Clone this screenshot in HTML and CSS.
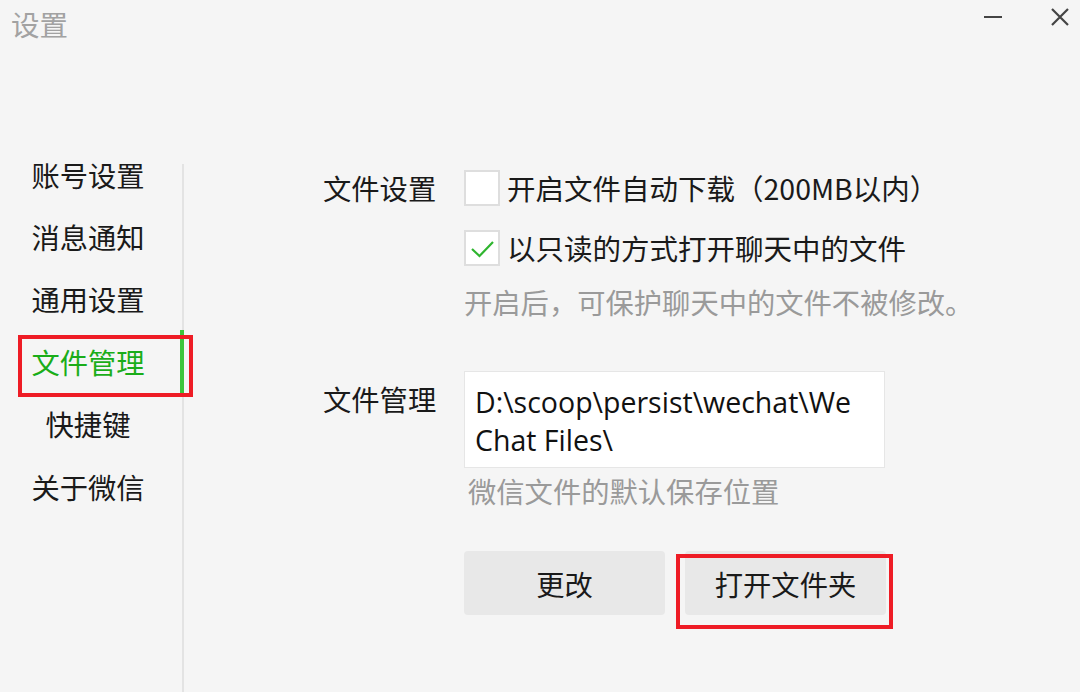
FILE: index.html
```html
<!DOCTYPE html>
<html lang="zh-CN">
<head>
<meta charset="utf-8">
<title>设置</title>
<link rel="stylesheet" href="styles.css">
</head>
<body>
<div class="window">
  <header class="titlebar">
    <div class="title">设置</div>
    <div class="controls">
      <svg class="ctl-min" width="18" height="4" viewBox="0 0 18 4"><line x1="0" y1="2" x2="18" y2="2" stroke="#444" stroke-width="2"/></svg>
      <svg class="ctl-close" width="18" height="18" viewBox="0 0 18 18"><path d="M1 1 L17 17 M17 1 L1 17" stroke="#444" stroke-width="2.2" fill="none"/></svg>
    </div>
  </header>
  <div class="main">
    <nav class="sidebar">
      <div class="nav-item">账号设置</div>
      <div class="nav-item">消息通知</div>
      <div class="nav-item">通用设置</div>
      <div class="nav-item active">文件管理</div>
      <div class="nav-item">快捷键</div>
      <div class="nav-item">关于微信</div>
    </nav>
    <section class="content">
      <div class="row">
        <div class="label">文件设置</div>
        <div class="group">
          <div class="option">
            <span class="checkbox"></span>
            <span class="opt-text">开启文件自动下载（200MB以内）</span>
          </div>
          <div class="option second">
            <span class="checkbox">
              <svg width="36" height="36" viewBox="0 0 36 36"><path d="M8 19 L15.5 26 L29 12" stroke="#2fb52f" stroke-width="2.2" fill="none"/></svg>
            </span>
            <span class="opt-text">以只读的方式打开聊天中的文件</span>
          </div>
          <div class="hint first-hint">开启后，可保护聊天中的文件不被修改。</div>
        </div>
      </div>
      <div class="row row-files">
        <div class="label label-files">文件管理</div>
        <div class="group">
          <div class="path-box">D:\scoop\persist\wechat\WeChat Files\</div>
          <div class="hint path-hint">微信文件的默认保存位置</div>
          <div class="buttons">
            <button class="btn">更改</button>
            <button class="btn marked">打开文件夹</button>
          </div>
        </div>
      </div>
    </section>
  </div>
</div>
</body>
</html>
```
FILE: styles.css
```css
*, *::before, *::after { box-sizing: border-box; }
html, body {
  margin: 0;
  padding: 0;
  background: #f5f5f5;
}
body {
  font-family: "Noto Sans CJK SC", "Noto Sans", sans-serif;
  color: #1a1a1a;
  width: 1080px;
  height: 692px;
  overflow: hidden;
}
.window {
  display: flex;
  flex-direction: column;
  height: 692px;
}
.titlebar {
  height: 60px;
  display: flex;
  justify-content: space-between;
  align-items: flex-start;
  padding: 0 11px 0 11px;
}
.title {
  font-size: 28.5px;
  line-height: 48px;
  color: #a2a2a2;
}
.controls {
  display: flex;
  align-items: flex-start;
  gap: 49px;
  padding-top: 8px;
}
.ctl-min { margin-top: 7px; }
.main {
  flex: 1;
  display: flex;
}
.sidebar {
  width: 184px;
  position: relative;
  padding-top: 83px;
  display: flex;
  flex-direction: column;
}
.sidebar::after {
  content: "";
  position: absolute;
  right: 0;
  top: 104px;
  bottom: 0;
  width: 2px;
  background: #e3e3e3;
}
.nav-item {
  height: 62.4px;
  display: flex;
  align-items: center;
  justify-content: center;
  padding-right: 8px;
  font-size: 28.3px;
  color: #1a1a1a;
}
.nav-item.active {
  color: #1aad19;
  position: relative;
  z-index: 1;
  box-shadow: inset -4px 0 0 #3cc43c;
}
.nav-item.active::after {
  content: "";
  position: absolute;
  left: 18px;
  top: 5px;
  width: 175px;
  height: 62px;
  border: 4px solid #ee1c25;
}
.content {
  flex: 1;
  padding: 110px 0 0 139px;
  display: flex;
  flex-direction: column;
}
.row {
  display: flex;
}
.label {
  width: 141px;
  font-size: 28.3px;
  line-height: 36px;
  color: #1a1a1a;
}
.group {
  display: flex;
  flex-direction: column;
}
.option {
  display: flex;
  align-items: center;
  height: 36px;
}
.option.second { margin-top: 24px; }
.checkbox {
  width: 36px;
  height: 36px;
  background: #fff;
  border: 2px solid #dedede;
  margin-right: 7px;
  position: relative;
}
.checkbox svg {
  position: absolute;
  left: -2px;
  top: -2px;
}
.opt-text {
  font-size: 28.5px;
  line-height: 36px;
}
.hint {
  font-size: 28.3px;
  line-height: 36px;
  color: #9a9a9a;
}
.first-hint { margin-top: 18px; }
.row-files { margin-top: 51px; }
.label-files { margin-top: 10px; }
.path-box {
  width: 421px;
  height: 97px;
  background: #fff;
  border: 1px solid #e6e6e6;
  padding: 11px 18px 0 10px;
  font-family: "Open Sans", "Noto Sans", sans-serif;
  font-size: 28.5px;
  line-height: 38px;
  color: #111;
  word-break: break-all;
}
.path-hint {
  margin-top: 5px;
  padding-left: 4px;
}
.buttons {
  display: flex;
  gap: 20px;
  margin-top: 42px;
}
.btn {
  width: 201px;
  height: 64px;
  border: none;
  border-radius: 4px;
  background: #e8e8e8;
  font-family: "Noto Sans CJK SC", sans-serif;
  font-size: 28.3px;
  color: #1a1a1a;
  padding: 0;
}
.btn.marked {
  position: relative;
}
.btn.marked::after {
  content: "";
  position: absolute;
  left: -9px;
  top: 3px;
  width: 217px;
  height: 75px;
  border: 4px solid #ee1c25;
}
```
